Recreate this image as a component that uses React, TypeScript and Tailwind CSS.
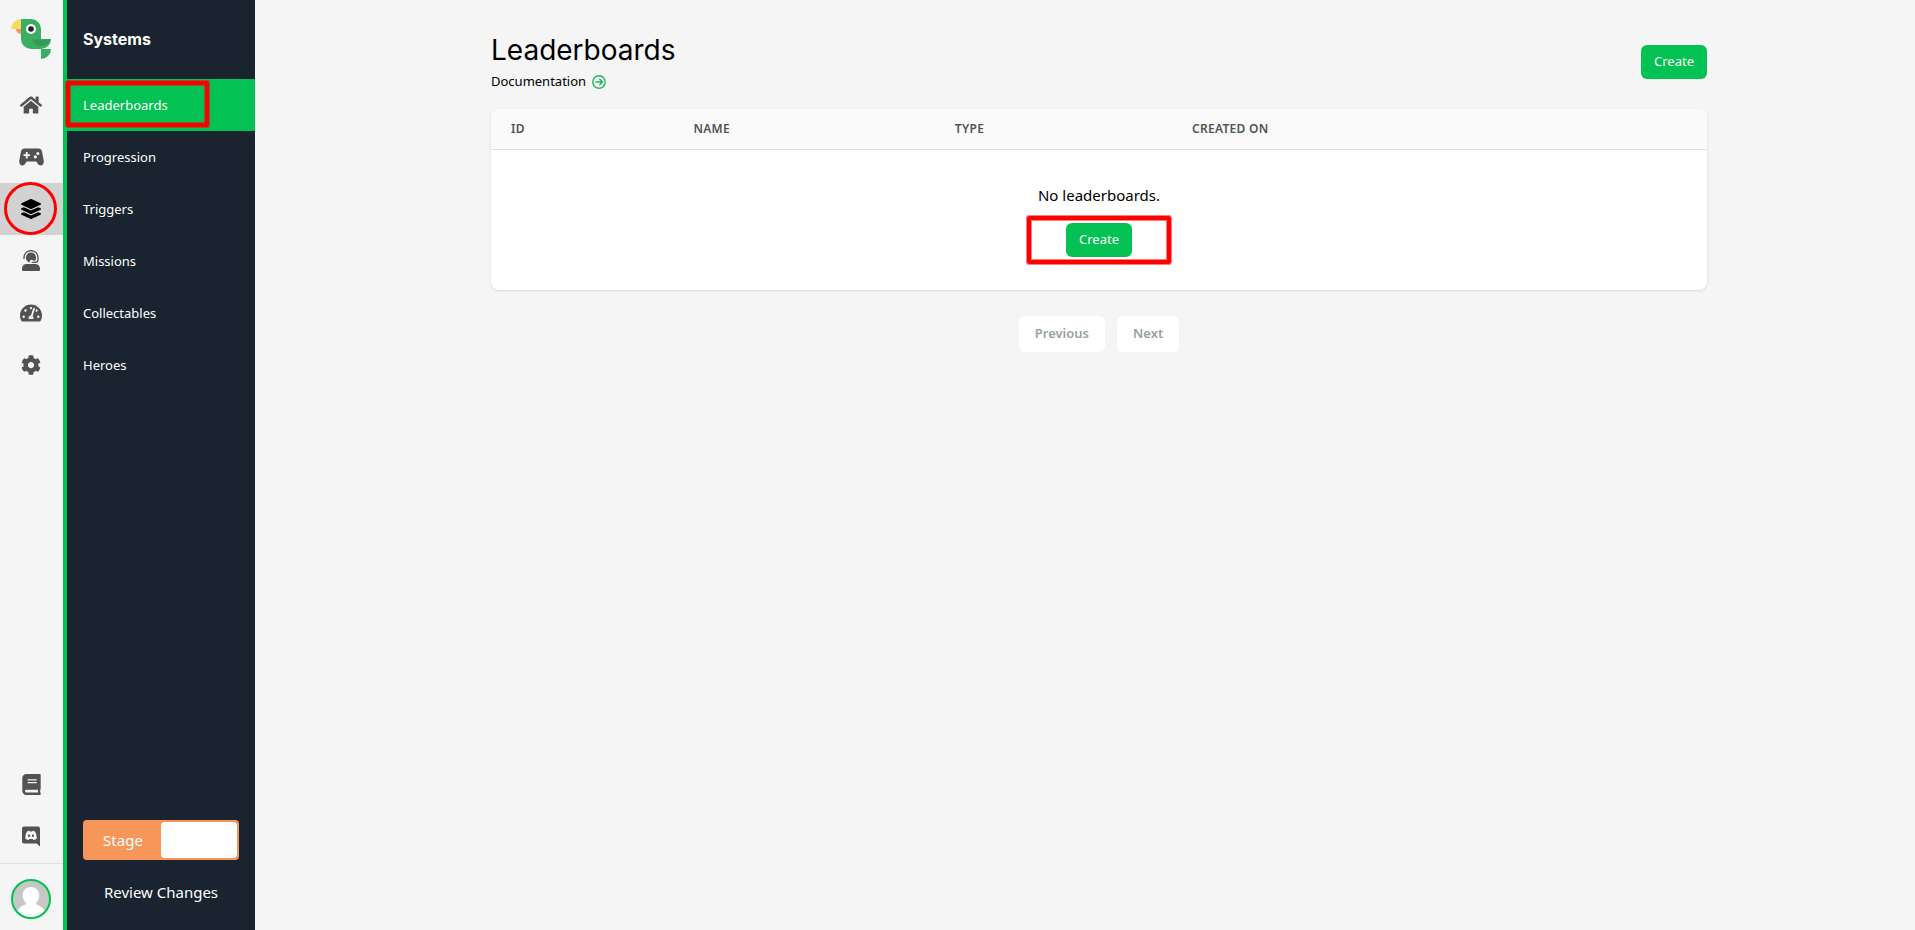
import * as React from "react";
import { FaBook, FaCog, FaHome, FaLayerGroup, FaTachometerAlt } from "react-icons/fa";
import clsx from "clsx";

const ParrotLogo = () => (
    <svg viewBox="0 0 40 40" className="size-10" aria-hidden="true">
        <path d="M0 10A10 10 0 0 1 10 0V10Z" fill="#f2dd60" />
        <path d="M5 10H10V15A5 5 0 0 1 5 10Z" fill="#f8955a" />
        <path d="M10 0H20A10 10 0 0 1 30 10V20H40A10 10 0 0 1 30 30H20A10 10 0 0 1 10 20Z" fill="#3aae61" />
        <path d="M21 20.5H40L36 25Q33 27 29 27Q23 26 21 20.5Z" fill="#389a57" />
        <path d="M30 30H40A10 10 0 0 1 30 40Z" fill="#3aae61" />
        <circle cx="20" cy="10" r="5" fill="#fff" />
        <circle cx="20" cy="10" r="2.8" fill="#1a2431" />
    </svg>
);

const GamepadIcon = () => (
    <svg viewBox="0 0 25 18" className="h-[18px] w-[25px]" fill="currentColor" aria-hidden="true">
        <path
            fillRule="evenodd"
            d="M5.6.5H19.4C21.3.5 22.5 1.6 23 3.4L24.7 12.4C25.1 15.3 24 17.5 21.8 17.5C20.3 17.5 19.3 16.8 18.6 15.6L17.3 13.4H7.7L6.4 15.6C5.7 16.8 4.7 17.5 3.2 17.5C1 17.5-.1 15.3.3 12.4L2 3.4C2.5 1.6 3.7.5 5.6.5ZM6.8 4V6.2H4.5V8.1H6.8V10.4H8.7V8.1H11V6.2H8.7V4ZM18.9 3.9A1.6 1.6 0 1 0 18.9 7.1A1.6 1.6 0 1 0 18.9 3.9ZM16.3 7.3A1.6 1.6 0 1 0 16.3 10.5A1.6 1.6 0 1 0 16.3 7.3Z"
        />
    </svg>
);

const HeadsetUserIcon = () => (
    <svg viewBox="0 0 18 21" className="h-[21px] w-[18px]" fill="currentColor" aria-hidden="true">
        <path d="M2 9V7.6A7 7 0 0 1 16 7.6V9.4Q16 12.3 13 12.3H9.6" fill="none" stroke="currentColor" strokeWidth="1.3" />
        <path d="M3.9 7.6A5.1 5.1 0 0 1 14.1 7.6Q14.1 9.4 13.2 10.8H11.4A1.9 1.9 0 0 0 8 12.6Q3.9 11.8 3.9 7.6Z" />
        <path d="M0 20V18.6A4.6 4.6 0 0 1 4.6 14H13.4A4.6 4.6 0 0 1 18 18.6V20Q18 21 17 21H1Q0 21 0 20Z" />
    </svg>
);

const DiscordIcon = () => (
    <svg viewBox="0 0 18 21" className="h-[21px] w-[18px]" fill="currentColor" aria-hidden="true">
        <path
            fillRule="evenodd"
            d="M2 .5H16A2 2 0 0 1 18 2.5V20.5L14.6 17.6H2A2 2 0 0 1 0 15.6V2.5A2 2 0 0 1 2 .5ZM5 5.6Q3.5 8 3.1 12.2Q4.4 14 6.7 14L7.3 13.1H10.7L11.3 14Q13.6 14 14.9 12.2Q14.5 8 13 5.6Q11.8 4.8 10.5 4.8L10.1 5.6H7.9L7.5 4.8Q6.2 4.8 5 5.6Z"
        />
        <ellipse cx="7" cy="9.8" rx="1.1" ry="1.3" />
        <ellipse cx="11" cy="9.8" rx="1.1" ry="1.3" />
    </svg>
);

const ArrowCircleIcon = () => (
    <svg viewBox="0 0 14 14" className="size-3.5 text-[#1fb863]" fill="none" stroke="currentColor" strokeWidth="1.4" aria-hidden="true">
        <circle cx="7" cy="7" r="6.2" />
        <path d="M3.4 7H10.2M7.4 4L10.4 7L7.4 10" />
    </svg>
);

const Avatar = () => (
    <svg viewBox="0 0 40 40" className="size-10" aria-hidden="true">
        <clipPath id="avatar-clip">
            <circle cx="20" cy="20" r="19" />
        </clipPath>
        <g clipPath="url(#avatar-clip)">
            <rect width="40" height="40" fill="#c6c8c6" />
            <path d="M20 8C25 8 28.3 11.5 28.3 16.5C28.3 20 27 22 25.2 23.6V25.4C31 27 34 30 35 37V40H5V37C6 30 9 27 14.8 25.4V23.6C13 22 11.7 20 11.7 16.5C11.7 11.5 15 8 20 8Z" fill="#fff" />
        </g>
        <circle cx="20" cy="20" r="19" fill="none" stroke="#03c152" strokeWidth="2" />
    </svg>
);

const railItems = [
    { label: "Home", icon: <FaHome size={22} /> },
    { label: "Games", icon: <GamepadIcon /> },
    { label: "Systems", icon: <FaLayerGroup size={20} />, active: true },
    { label: "Players", icon: <HeadsetUserIcon /> },
    { label: "Analytics", icon: <FaTachometerAlt size={22} /> },
    { label: "Settings", icon: <FaCog size={20} /> },
];

const navItems = ["Leaderboards", "Progression", "Triggers", "Missions", "Collectables", "Heroes"];

const Highlight = ({ className }: { className: string }) => (
    <span
        className={clsx(
            "pointer-events-none absolute rounded-xs border-4 border-[#ff0000] shadow-[0_0_0_1px_#ff000080,inset_0_0_0_1px_#ff000080]",
            className
        )}
    />
);

const CreateButton = () => (
    <button type="button" className="h-[34px] rounded-md bg-[#03c152] px-[13px] text-[13px] text-white">
        Create
    </button>
);

const IconRail = () => (
    <nav aria-label="Main" className="flex w-[63px] shrink-0 flex-col text-[#525252]">
        <a href="#" aria-label="Dashboard" className="flex h-[79px] items-center justify-center pr-px pb-px">
            <ParrotLogo />
        </a>
        {railItems.map((item) => (
            <a
                key={item.label}
                href="#"
                aria-label={item.label}
                className={clsx("relative flex h-[52px] items-center justify-center pr-px pb-px", item.active && "bg-[#d2d2d2] text-black")}
            >
                {item.icon}
                {item.active && (
                    <span className="pointer-events-none absolute left-1 -top-px size-[53px] rounded-full border-3 border-[#ff0000]" />
                )}
            </a>
        ))}

        <div className="mt-auto">
            <a href="#" aria-label="Docs" className="flex h-[52px] items-center justify-center pr-px">
                <FaBook size={21} />
            </a>
            <a href="#" aria-label="Discord" className="flex h-[53px] items-center justify-center pr-px">
                <DiscordIcon />
            </a>
            <a href="#" aria-label="Account" className="flex h-[67px] items-center justify-center border-t border-[#e0e0e0] pt-1 pr-px">
                <Avatar />
            </a>
        </div>
    </nav>
);

const Sidebar = () => (
    <aside className="flex w-48 shrink-0 flex-col border-l-4 border-[#03c152] bg-[#1a2431] text-white">
        <h2 className="flex h-[79px] items-center px-4 pb-0.5 font-['Inter',sans-serif] text-base font-bold">Systems</h2>
        <nav aria-label="Systems">
            {navItems.map((item, i) => (
                <a
                    key={item}
                    href="#"
                    className={clsx("relative flex h-[52px] items-center px-4 pt-0.5 text-[13px]", i === 0 && "bg-[#03c152]")}
                >
                    {item}
                    {i === 0 && <Highlight className="-left-px top-0.5 h-[46px] w-[143px]" />}
                </a>
            ))}
        </nav>

        <div className="mt-auto px-4 pb-[26px]">
            <button type="button" aria-label="Switch environment" className="flex h-10 w-full rounded-sm bg-[#f8965a] p-0.5 text-[15px]">
                <span className="flex h-full flex-1 items-center justify-center">Stage</span>
                <span className="h-full flex-1 rounded-sm bg-white" />
            </button>
            <a href="#" className="mt-5 block text-center text-[15px] leading-6">
                Review Changes
            </a>
        </div>
    </aside>
);

export default function App() {
    return (
        <div className="flex min-h-screen bg-[#f5f5f5] font-['Noto_Sans',sans-serif] text-black">
            <IconRail />
            <Sidebar />

            <main className="min-w-0 flex-1 pl-7">
                <div className="mx-auto max-w-7xl px-8 pt-8">
                    {/* Page header */}
                    <div className="flex items-center justify-between pb-[17px]">
                        <div>
                            <h1 className="font-['Inter',sans-serif] text-[28px] leading-9">Leaderboards</h1>
                            <a href="#" className="mt-1 flex h-5 items-center gap-1.5 text-[13px]">
                                Documentation
                                <ArrowCircleIcon />
                            </a>
                        </div>
                        <CreateButton />
                    </div>

                    <div className="overflow-hidden rounded-lg bg-white shadow-sm">
                        <table className="w-full table-fixed">
                            <thead className="border-b border-[#e0e0e0] bg-[#fafafa]">
                                <tr className="h-10 text-left text-xs tracking-wide text-[#505550]">
                                    <th className="w-[15%] px-5 font-semibold">ID</th>
                                    <th className="w-[21.5%] px-5 font-semibold">NAME</th>
                                    <th className="w-[19.5%] px-5 font-semibold">TYPE</th>
                                    <th className="px-5 font-semibold">CREATED ON</th>
                                </tr>
                            </thead>
                            <tbody>
                                <tr>
                                    <td colSpan={4} className="py-[33px] text-center">
                                        <p className="text-[15px] leading-6">No leaderboards.</p>
                                        <div className="relative mx-auto mt-4 w-fit">
                                            <CreateButton />
                                            <Highlight className="-inset-x-[39px] -inset-y-[7px]" />
                                        </div>
                                    </td>
                                </tr>
                            </tbody>
                        </table>
                    </div>

                    {/* Pagination */}
                    <div className="mt-[26px] flex justify-center gap-3 text-[13px] font-semibold">
                        <button type="button" disabled className="h-9 rounded-md bg-white px-4 text-[#97a39b]">
                            Previous
                        </button>
                        <button type="button" disabled className="h-9 rounded-md bg-white px-4 text-[#97a39b]">
                            Next
                        </button>
                    </div>
                </div>
            </main>
        </div>
    );
}
